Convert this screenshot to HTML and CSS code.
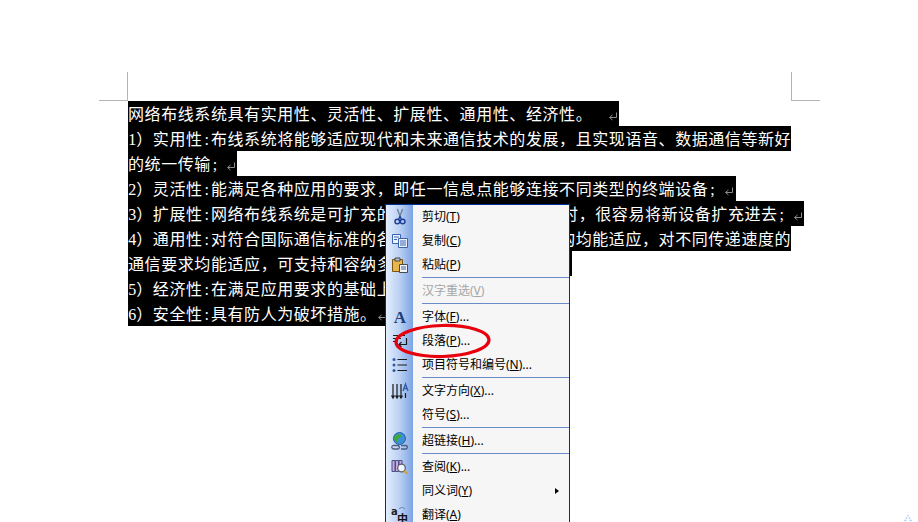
FILE: index.html
```html
<!DOCTYPE html>
<html lang="zh-CN">
<head>
<meta charset="utf-8">
<title>网络布线系统</title>
<link rel="stylesheet" href="styles.css">
</head>
<body>
<div class="page">
  <i class="crop crop-left"></i>
  <i class="crop crop-right"></i>

  <main class="doc">
    <p class="line"><span class="sel">网络布线系统具有实用性、灵活性、扩展性、通用性、经济性。<b class="h">&nbsp;</b><svg class="pm" viewBox="0 0 10 10"><path d="M8.500 1.500v5H2M4.500 4 1.500 6.500 4.500 9"/></svg></span></p>
    <p class="line"><span class="sel"><b class="h">1</b>）实用性<b class="h">:</b>布线系统将能够适应现代和未来通信技术的发展，且实现语音、数据通信等新好</span></p>
    <p class="line"><span class="sel">的统一传输<b class="h">;</b><svg class="pm" viewBox="0 0 10 10"><path d="M8.500 1.500v5H2M4.500 4 1.500 6.500 4.500 9"/></svg></span></p>
    <p class="line"><span class="sel"><b class="h">2</b>）灵活性<b class="h">:</b>能满足各种应用的要求，即任一信息点能够连接不同类型的终端设备<b class="h">;</b><svg class="pm pm-wide" viewBox="0 0 10 10"><path d="M8.500 1.500v5H2M4.500 4 1.500 6.500 4.500 9"/></svg></span></p>
    <p class="line"><span class="sel"><b class="h">3</b>）扩展性<b class="h">:</b>网络布线系统是可扩充的，当系统需要增加设备<i class="gap"></i>时，很容易将新设备扩充进去<b class="h">;</b><svg class="pm" viewBox="0 0 10 10"><path d="M8.500 1.500v5H2M4.500 4 1.500 6.500 4.500 9"/></svg></span></p>
    <p class="line"><span class="sel"><b class="h">4</b>）通用性<b class="h">:</b>对符合国际通信标准的各种计算机和网络拓扑结构均能适应，对不同传递速度的</span></p>
    <p class="line"><span class="sel">通信要求均能适应，可支持和容纳多种计算机网络的运行<b class="h">;</b><i class="gap"></i><svg class="pm" viewBox="0 0 10 10"><path d="M8.500 1.500v5H2M4.500 4 1.500 6.500 4.500 9"/></svg></span></p>
    <p class="line"><span class="sel"><b class="h">5</b>）经济性<b class="h">:</b>在满足应用要求的基础上，尽可能降低造价<b class="h">;</b></span></p>
    <p class="line"><span class="sel"><b class="h">6</b>）安全性<b class="h">:</b>具有防人为破坏措施。<svg class="pm pm-tight" viewBox="0 0 10 10"><path d="M8.500 1.500v5H2M4.500 4 1.500 6.500 4.500 9"/></svg></span></p>
  </main>

  <nav class="menu">
    <div class="item">
      <span class="ico"><svg viewBox="0 0 18 20"><path class="blade" d="M6 1l3.500 9M12 1 8.500 10"/><circle class="ring" cx="6" cy="15" r="2.600"/><circle class="ring" cx="12" cy="15" r="2.600"/><path class="ring" d="M7.500 12.500 9 9.500l1.500 3"/></svg></span>
      <span class="lbl">剪切(<u>T</u>)</span>
    </div>
    <div class="item">
      <span class="ico"><svg viewBox="0 0 18 18"><path class="doc1" d="M1.500 2.500h8v9h-8z"/><path class="doc2" d="M7.500 6.500h9v9h-9z"/><path class="lines" d="M3 5h5M3 7.500h3M9 9h6M9 11h6M9 13h6"/></svg></span>
      <span class="lbl">复制(<u>C</u>)</span>
    </div>
    <div class="item">
      <span class="ico"><svg viewBox="0 0 18 18"><path class="clip" d="M1.500 3.500h10v12h-10z"/><path class="clip-top" d="M4 2h5v3H4z"/><path class="sheet" d="M8.500 8.500h8v8h-8z"/><path class="lines" d="M10 11h5M10 13h5"/></svg></span>
      <span class="lbl">粘贴(<u>P</u>)</span>
    </div>
    <hr class="sep">
    <div class="item item-off">
      <span class="ico"></span>
      <span class="lbl">汉字重选(<u>V</u>)</span>
    </div>
    <hr class="sep">
    <div class="item">
      <span class="ico"><svg viewBox="0 0 18 18"><text class="big-a" x="9" y="15" text-anchor="middle">A</text></svg></span>
      <span class="lbl">字体(<u>F</u>)...</span>
    </div>
    <div class="item">
      <span class="ico"><svg viewBox="0 0 18 18"><path class="ink" d="M2 3.500h12M2 6.500h8M2 9.500h5M15.500 6v6.500H8M10.500 10 8 12.500l2.500 2.500"/></svg></span>
      <span class="lbl">段落(<u>P</u>)...</span>
    </div>
    <div class="item">
      <span class="ico"><svg viewBox="0 0 18 18"><path class="ink" d="M6.500 3.500H16M6.500 9H16M6.500 14.500H16"/><circle class="dot" cx="3" cy="3.500" r="1.500"/><circle class="dot" cx="3" cy="9" r="1.500"/><circle class="dot" cx="3" cy="14.500" r="1.500"/></svg></span>
      <span class="lbl">项目符号和编号(<u>N</u>)...</span>
    </div>
    <hr class="sep">
    <div class="item">
      <span class="ico"><svg viewBox="0 0 18 18"><path class="ink" d="M2 2v14M6 2v14M10 2v14M.5 13.500 2 16l1.500-2.500M4.500 13.500 6 16l1.500-2.500M8.500 13.500 10 16l1.500-2.500"/><path class="small-a" d="M12 9l2.500-7L17 9M13 6.500h3"/><path class="ink" d="M14.500 11v5"/></svg></span>
      <span class="lbl">文字方向(<u>X</u>)...</span>
    </div>
    <div class="item">
      <span class="ico"></span>
      <span class="lbl">符号(<u>S</u>)...</span>
    </div>
    <hr class="sep">
    <div class="item">
      <span class="ico"><svg viewBox="0 0 18 18"><circle class="globe" cx="8.500" cy="6.500" r="6"/><path class="land" d="M5 2.500c2 0 4-.5 5 .5s-1 3-2.500 3.500S6 9 7 11c-2-.5-4-3-4-4.500s1-3.500 2-4z"/><path class="chain" d="M2 13.500h5a1.800 1.800 0 0 1 0 3.500H2.500a1.800 1.800 0 0 1-.5-3.500zM10 13.500h5a1.800 1.800 0 0 1 0 3.500h-5"/></svg></span>
      <span class="lbl">超链接(<u>H</u>)...</span>
    </div>
    <hr class="sep">
    <div class="item">
      <span class="ico"><svg viewBox="0 0 18 18"><path class="book" d="M1 2.500h3v11H1zM4.500 2.500h3v11h-3zM8 2.500h3v5H8z"/><circle class="lens" cx="10.500" cy="10" r="3.800"/><path class="handle" d="m13 12.800 3.500 2.700"/></svg></span>
      <span class="lbl">查阅(<u>K</u>)...</span>
    </div>
    <div class="item">
      <span class="ico"></span>
      <span class="lbl">同义词(<u>Y</u>)</span>
      <i class="more"></i>
    </div>
    <div class="item">
      <span class="ico"><svg viewBox="0 0 18 18"><text class="t-a" x="0" y="9">a</text><path class="t-arc" d="M8 3c2-2 4-2 6 0"/><text class="t-zh" x="6" y="17">中</text></svg></span>
      <span class="lbl">翻译(<u>A</u>)</span>
    </div>
  </nav>

  <svg class="circle" viewBox="0 0 100 38"><ellipse cx="49.500" cy="19" rx="46.500" ry="15.500" transform="rotate(-1.500 49.500 19)"/></svg>

  <svg class="corner" viewBox="0 0 12 9"><path d="M5 0h2v2H5zM3 3h2v2H3zM7 3h2v2H7zM1 6h3v2H1zM8 6h3v2H8z"/></svg>
</div>
</body>
</html>
```

FILE: styles.css
```css
* { box-sizing: border-box; }

html, body {
  margin: 0;
  padding: 0;
  background: #fff;
}

.page {
  position: relative;
  width: 918px;
  height: 522px;
  overflow: hidden;
  background: #fff;
}

/* page corner marks */
.crop {
  position: absolute;
  top: 72px;
  width: 29px;
  height: 29px;
  border-bottom: 1px solid #b4b4b4;
}
.crop-left {
  left: 99px;
  border-right: 1px solid #b4b4b4;
}
.crop-right {
  left: 791px;
  border-left: 1px solid #b4b4b4;
}

/* document body */
.doc {
  padding: 101px 0 0 128px;
  font: 400 16px/25px "Noto Sans CJK SC", sans-serif;
  letter-spacing: .58px;
  white-space: nowrap;
}

.line {
  margin: 0;
  height: 25px;
}

.sel {
  display: inline-block;
  height: 25px;
  vertical-align: top;
  background: #000;
  color: #fff;
}

.h {
  display: inline-block;
  width: 8.29px;
  font-weight: 400;
  letter-spacing: 0;
  font-family: "Liberation Serif", serif;
  text-align: center;
}

.gap {
  display: inline-block;
  width: 3px;
}

.pm {
  display: inline-block;
  width: 11px;
  height: 10px;
  margin-left: 7px;
  padding-right: 1px;
  vertical-align: -1px;
  fill: none;
  stroke: #8c8c8c;
  stroke-width: 1;
}
.pm-tight { margin-left: 0; }
.pm-wide { margin-right: 1px; }

/* context menu */
.menu {
  position: absolute;
  left: 385px;
  top: 204px;
  width: 185px;
  height: 330px;
  border: 1px solid #002d96;
  background: linear-gradient(to right, #e3eefd 0, #b9cff3 14px, #7ca4e3 27px, #f6f6f6 27px);
  font: 12px/24px "Noto Sans", "Noto Sans CJK SC", sans-serif;
  color: #000;
  white-space: nowrap;
}

.item {
  display: flex;
  align-items: center;
  height: 24px;
}

.item-off { color: #a6a6a6; }

.ico {
  flex: none;
  display: flex;
  align-items: center;
  justify-content: center;
  width: 27px;
  height: 24px;
}
.ico svg {
  width: 18px;
  height: 18px;
  overflow: visible;
}

.lbl {
  margin-left: 9px;
}
.lbl u { text-underline-offset: 1px; }

.sep {
  height: 2px;
  margin: 0 0 0 36px;
  border: 0;
  border-top: 1px solid #6a8ccb;
  background: #f6f6f6;
}

.more {
  margin-left: auto;
  margin-right: 10px;
  width: 0;
  height: 0;
  border-left: 4px solid #000;
  border-top: 3.5px solid transparent;
  border-bottom: 3.5px solid transparent;
}

/* menu icons */
.blade { fill: none; stroke: #6f7f96; stroke-width: 1.500; }
.ring { fill: none; stroke: #1f3f96; stroke-width: 1.600; }
.doc1, .doc2 { fill: #eef4ff; stroke: #3a62b0; }
.sheet { fill: #f4f4f4; stroke: #4a4a4a; }
.lines { fill: none; stroke: #3a62b0; }
.clip { fill: #e8b64a; stroke: #7a5412; }
.clip-top { fill: #b9c2cf; stroke: #444; }
.big-a { font: 700 17px "Liberation Serif", serif; fill: #1f3f7a; }
.ink { fill: none; stroke: #1a1a1a; stroke-width: 1.200; }
.dot { fill: #2f5ba8; }
.small-a { fill: none; stroke: #2f5ba8; stroke-width: 1.300; }
.globe { fill: #3f8fd8; stroke: #1f5ea8; }
.land { fill: #3fa83c; }
.chain { fill: none; stroke: #4a5f80; stroke-width: 1.300; }
.book { fill: #c8a9d8; stroke: #4a4f8a; }
.lens { fill: #f2f8ff; stroke: #59606e; stroke-width: 1.300; }
.handle { fill: none; stroke: #d6a12c; stroke-width: 2.200; }
.t-a { font: 700 10px "DejaVu Sans", sans-serif; fill: #222; }
.t-zh { font: 700 11px "Noto Sans CJK SC", sans-serif; fill: #111; }
.t-arc { fill: none; stroke: #5f7fb0; }

/* hand-drawn red ring */
.circle {
  position: absolute;
  left: 393px;
  top: 322px;
  width: 100px;
  height: 38px;
  fill: none;
  stroke: #e8000c;
  stroke-width: 3.200;
}

.corner {
  position: absolute;
  left: 902px;
  top: 515px;
  width: 12px;
  height: 7px;
  fill: #b5d4f7;
}
```
